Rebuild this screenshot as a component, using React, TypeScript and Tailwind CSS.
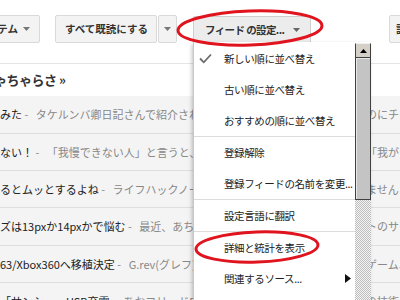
import React from 'react';

const rows = [
  { h: 'h-[37px]', title: 'みた', snip: 'タケルンバ卿日記さんで紹介されていた', right: 'のにチーム' },
  { h: 'h-[36px]', title: 'ない！', snip: '「我慢できない人」と言うと、一般的に', right: '「我が' },
  { h: 'h-[36px]', title: 'るとムッとするよね', snip: 'ライフハックノート', right: 'ませんノ' },
  { h: 'h-[37px]', title: 'ズは13pxか14pxかで悩む', snip: '最近、あちこちのサイト', right: 'トのサイ' },
  { h: 'h-[36px]', title: '63/Xbox360へ移植決定', snip: 'G.rev(グレフ)の', right: 'ゲーム、' },
  { h: 'h-[37px]', title: '「サンシー、USB充電', snip: 'あおフリードDual', right: 'の技術' },
];

const Caret = ({ color = '#777' }: { color?: string }) => (
  <svg width="7" height="4" viewBox="0 0 7 4" className="shrink-0">
    <path d="M0 0 H7 L3.5 4 Z" fill={color} />
  </svg>
);

const Sep = () => <div className="h-px shrink-0 bg-[#dcdcdc]" />;

const Item = ({ label, check, sub }: { label: string; check?: boolean; sub?: boolean }) => (
  <div className="flex h-[31px] shrink-0 items-center whitespace-nowrap">
    <div className="flex w-[30px] shrink-0 items-center pl-[5px]">
      {check && (
        <svg width="13" height="11" viewBox="0 0 13 11">
          <path d="M1 5.5 L4.8 9.3 L12 1.5" fill="none" stroke="#6b6b6b" strokeWidth="1.8" />
        </svg>
      )}
    </div>
    <span>{label}</span>
    {sub && (
      <svg width="6" height="9" viewBox="0 0 6 9" className="ml-auto mr-[4px] shrink-0">
        <path d="M0 0 L6 4.5 L0 9 Z" fill="#111" />
      </svg>
    )}
  </div>
);

export default function App() {
  return (
    <div
      className="relative h-[300px] w-[400px] overflow-hidden bg-white"
      style={{ fontFamily: '"Noto Sans CJK JP", "Noto Sans", sans-serif' }}
    >
      {/* toolbar */}
      <div className="flex h-[43px] items-end text-[10.5px] font-bold text-[#333]">
        <div className="-ml-[20px] flex h-[28px] w-[60px] shrink-0 items-center justify-end gap-[5px] overflow-hidden rounded-[2px] border border-[#d9d9d9] bg-[#f3f3f3] pr-[9px] whitespace-nowrap">
          <span>すべてのアイテム</span>
          <Caret />
        </div>
        <div className="ml-[15px] flex h-[28px] w-[102px] shrink-0 items-center overflow-hidden rounded-[2px] border border-[#d9d9d9] bg-[#f3f3f3] pl-[9px] whitespace-nowrap">
          すべて既読にする
        </div>
        <div className="ml-px flex h-[28px] w-[19px] shrink-0 items-center justify-center rounded-[2px] border border-[#d9d9d9] bg-[#f3f3f3]">
          <Caret />
        </div>
        <div className="ml-[16px] flex h-[27px] w-[118px] shrink-0 items-center overflow-hidden rounded-t-[2px] border border-b-0 border-[#cfcfcf] bg-[#ececec] pl-[11px] pr-[10px] whitespace-nowrap">
          <span className="tracking-[-0.6px]">フィード の設定...</span>
          <span className="ml-auto">
            <Caret color="#666" />
          </span>
        </div>
        <div className="ml-[78px] flex h-[28px] w-[60px] shrink-0 items-center overflow-hidden rounded-[2px] border border-[#d9d9d9] bg-[#f3f3f3] pl-[6px] whitespace-nowrap">
          設定
        </div>
      </div>

      {/* divider + feed title */}
      <div className="mt-[20px] border-t border-[#e5e5e5]" />
      <div className="flex h-[32px] items-center whitespace-nowrap text-[13px] font-bold tracking-[-0.5px] text-[#333]">
        <span className="-ml-[6px]">ゃちゃらさ »</span>
      </div>

      {/* rows */}
      <div className="flex flex-col">
        {rows.map((r, i) => (
          <div
            key={i}
            className={`${r.h} box-content flex shrink-0 items-center border-b border-[#dedede] bg-[#f4f4f4] text-[11px] whitespace-nowrap`}
          >
            <div className="w-[366px] shrink-0 overflow-hidden">
              <span className="text-[#222]">{r.title}</span>
              <span className="text-[#888]"> - </span>
              <span className="ml-[5px] text-[#888]">{r.snip}</span>
            </div>
            <div className="text-[#888]">{r.right}</div>
          </div>
        ))}
      </div>

      {/* dropdown menu */}
      <div className="absolute left-[193px] top-[42px] flex h-[270px] w-[177px] border-l border-[#c8c8c8] bg-white text-[10.5px] tracking-[-0.4px] text-[#222] shadow-[-1px_2px_4px_rgba(0,0,0,0.25)]">
        <div className="flex w-[161px] shrink-0 flex-col overflow-hidden pt-px">
          <Item label="新しい順に並べ替え" check />
          <Item label="古い順に並べ替え" />
          <Item label="おすすめの順に並べ替え" />
          <Sep />
          <Item label="登録解除" />
          <Item label="登録フィードの名前を変更..." />
          <Sep />
          <Item label="設定言語に翻訳" />
          <Sep />
          <Item label="詳細と統計を表示" />
          <Item label="関連するソース..." sub />
        </div>
        <div className="flex w-[16px] shrink-0 flex-col">
          <div className="mt-px flex h-[15px] items-center justify-center border border-[#404040] border-t-[#f0f0f0] bg-[#d4d0c8]">
            <svg width="7" height="4" viewBox="0 0 7 4">
              <path d="M0 4 H7 L3.5 0 Z" fill="#000" />
            </svg>
          </div>
          <div className="h-[142px] border-x border-b border-[#404040] bg-[#c4c4c4] shadow-[inset_1px_1px_0_#e8e8e8]" />
          <div className="flex-1 bg-[repeating-conic-gradient(#bdbdbd_0%_25%,#f4f4f4_0%_50%)] bg-[length:2px_2px]" />
        </div>
      </div>

      {/* red annotation ellipses */}
      <svg className="pointer-events-none absolute left-0 top-0" width="400" height="300" viewBox="0 0 400 300">
        <ellipse cx="250" cy="28" rx="72" ry="17" fill="none" stroke="#e0141e" strokeWidth="3" transform="rotate(-2 250 28)" />
        <ellipse cx="257" cy="247" rx="61" ry="15" fill="none" stroke="#e0141e" strokeWidth="3" transform="rotate(-2 257 247)" />
      </svg>
    </div>
  );
}
